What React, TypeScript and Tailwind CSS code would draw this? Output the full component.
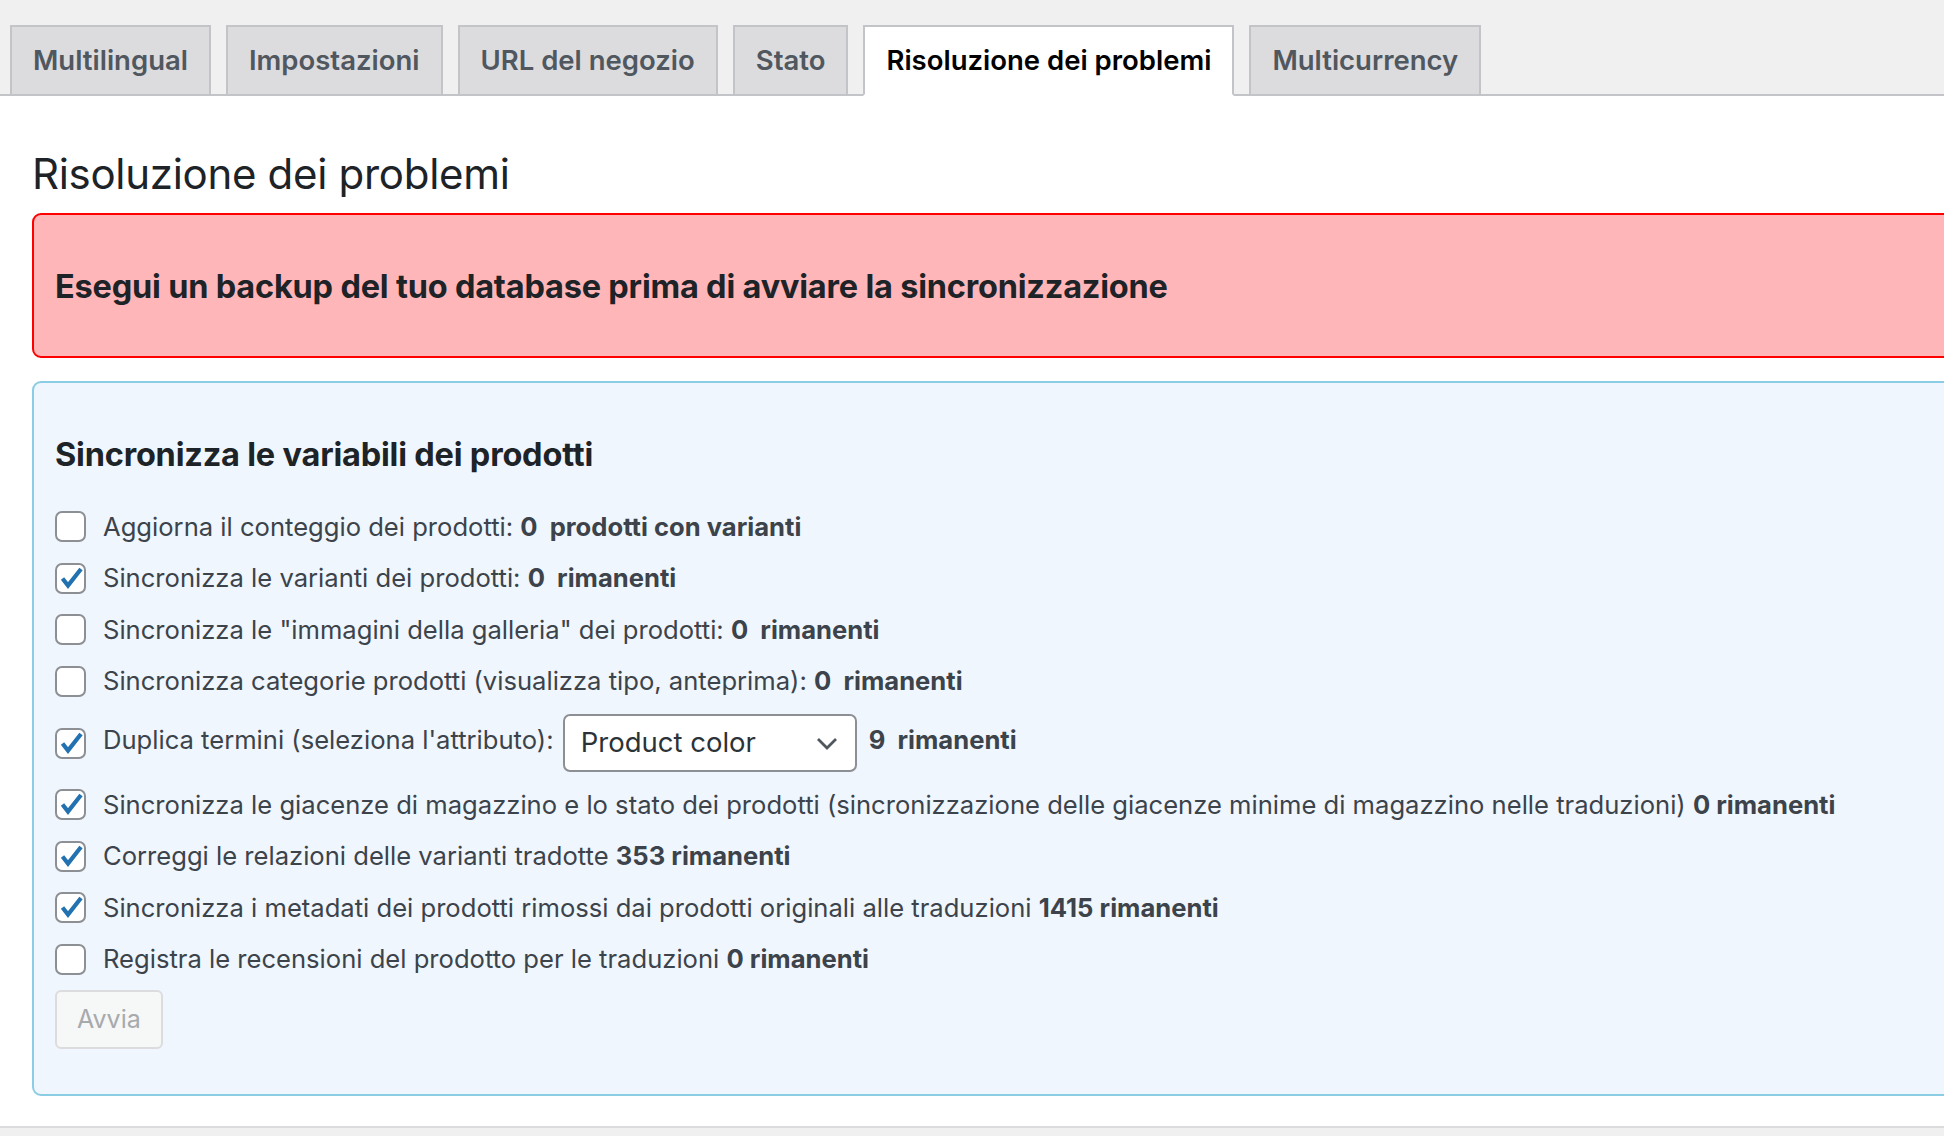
import React from "react";

type Row = {
  checked: boolean;
  label: string;
  count?: string;
  select?: boolean;
};

const rows: Row[] = [
  { checked: false, label: "Aggiorna il conteggio dei prodotti: ", count: "0  prodotti con varianti" },
  { checked: true, label: "Sincronizza le varianti dei prodotti: ", count: "0  rimanenti" },
  { checked: false, label: 'Sincronizza le "immagini della galleria" dei prodotti: ', count: "0  rimanenti" },
  { checked: false, label: "Sincronizza categorie prodotti (visualizza tipo, anteprima): ", count: "0  rimanenti" },
  { checked: true, label: "Duplica termini (seleziona l'attributo): ", select: true, count: "9  rimanenti" },
  {
    checked: true,
    label:
      "Sincronizza le giacenze di magazzino e lo stato dei prodotti (sincronizzazione delle giacenze minime di magazzino nelle traduzioni) ",
    count: "0 rimanenti",
  },
  { checked: true, label: "Correggi le relazioni delle varianti tradotte ", count: "353 rimanenti" },
  {
    checked: true,
    label: "Sincronizza i metadati dei prodotti rimossi dai prodotti originali alle traduzioni ",
    count: "1415 rimanenti",
  },
  { checked: false, label: "Registra le recensioni del prodotto per le traduzioni ", count: "0 rimanenti" },
];

const tabs = ["Multilingual", "Impostazioni", "URL del negozio", "Stato", "Risoluzione dei problemi", "Multicurrency"];

function Checkbox({ checked }: { checked: boolean }) {
  return (
    <span className="w-[31px] h-[31px] shrink-0 rounded-[7px] border-2 border-[#8c8f94] bg-white flex items-center justify-center">
      {checked && (
        <svg width="31" height="31" viewBox="0 0 31 31" className="-m-[2px]">
          <path d="M7.5 15.5 L13 22.5 L26 6" fill="none" stroke="#2271b1" strokeWidth="4.2" strokeLinejoin="miter" />
        </svg>
      )}
    </span>
  );
}

export default function App() {
  const active = "Risoluzione dei problemi";
  return (
    <div className="min-h-screen bg-[#f0f0f1] font-['Inter',sans-serif] overflow-hidden">
      {/* Tabs */}
      <div className="flex pt-[25px] pl-[10px] gap-[15px] border-b-2 border-[#c3c4c7]">
        {tabs.map((t) => (
          <div
            key={t}
            className={`h-[71px] -mb-[2px] px-[21px] flex items-center text-[27.5px] font-semibold border-2 ${
              t === active
                ? "bg-white text-black border-[#c3c4c7] border-b-white"
                : "bg-[#dcdcde] text-[#50575e] border-[#c3c4c7]"
            }`}
          >
            {t}
          </div>
        ))}
      </div>

      {/* Content */}
      <div className="bg-white h-[1032px] border-b-2 border-[#dcdcde] pl-[32px] overflow-hidden">
        <h1 className="pt-[53px] text-[42px] leading-[50px] text-[#1d2327] tracking-[-0.3px]">Risoluzione dei problemi</h1>

        <div className="mt-[14px] -mr-[40px] h-[145px] border-2 border-[#ff0000] bg-[#ffb6b8] rounded-[9px] flex items-center pl-[21px] pt-[3px]">
          <p className="text-[32.5px] font-bold text-[#1d2327] tracking-[-0.2px]">
            Esegui un backup del tuo database prima di avviare la sincronizzazione
          </p>
        </div>

        <div className="mt-[23px] -mr-[40px] h-[715px] border-2 border-[#8ccde6] bg-[#eff6fd] rounded-[9px] pl-[21px] pt-[50px] text-[#3c434a]">
          <h2 className="text-[32.5px] leading-[44px] font-bold text-[#1d2327] tracking-[-0.2px]">
            Sincronizza le variabili dei prodotti
          </h2>

          <div className="mt-[24px] flex flex-col text-[25.6px]">
            {rows.map((r, i) => (
              <div key={i} className={`flex items-center gap-[17px] ${r.select ? "h-[72px]" : "h-[51.5px]"}`}>
                <Checkbox checked={r.checked} />
                <div className="flex items-center whitespace-pre">
                  <span className={r.select ? "-mt-[5px]" : ""}>{r.label}</span>
                  {r.select && (
                    <span className="ml-[2px] mr-[12px] w-[294px] h-[58px] rounded-[7px] border-2 border-[#8c8f94] bg-white flex items-center justify-between pl-[16px] pr-[17px] text-[27.5px] text-[#2c3338]">
                      Product color
                      <svg width="22" height="13" viewBox="0 0 22 13">
                        <path d="M2 2 L11 11 L20 2" fill="none" stroke="#50575e" strokeWidth="2.8" />
                      </svg>
                    </span>
                  )}
                  <b className={`font-bold ${r.select ? "-mt-[5px]" : ""}`}>{r.count}</b>
                </div>
              </div>
            ))}
          </div>

          <button
            disabled
            className="mt-[5px] h-[59px] px-[20px] rounded-[6px] border-2 border-[#dcdcde] bg-[#f6f7f7] text-[#a7aaad] text-[25px]"
          >
            Avvia
          </button>
        </div>
      </div>
    </div>
  );
}
